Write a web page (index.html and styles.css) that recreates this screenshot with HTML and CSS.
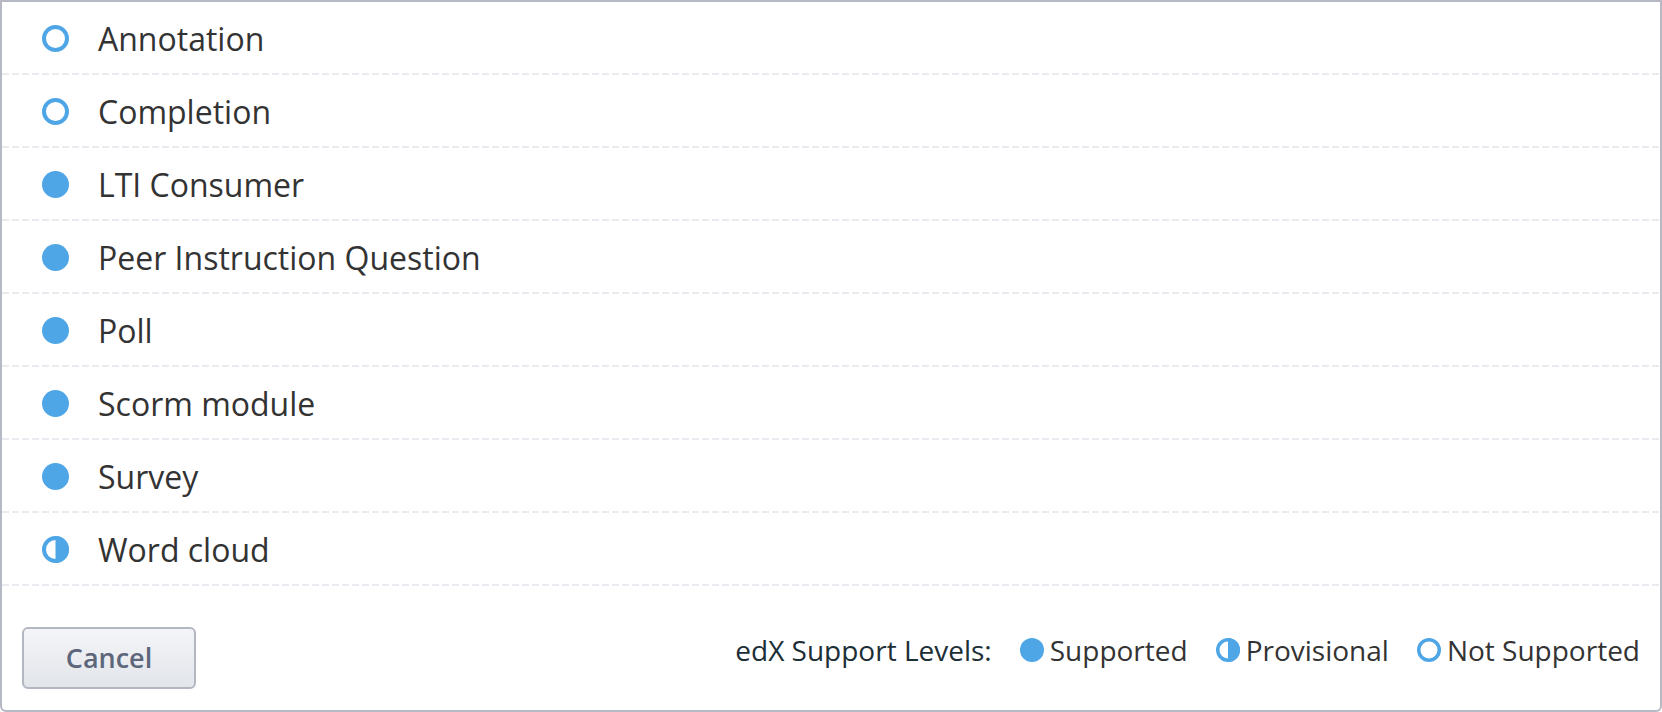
FILE: index.html
```html
<!DOCTYPE html>
<html>
<head>
<meta charset="utf-8">
<link rel="stylesheet" href="styles.css">
</head>
<body>
<div class="panel">
  <ul class="list">
    <li class="row"><svg class="ico" viewBox="0 0 27 27"><circle cx="13.5" cy="13.5" r="11.5" fill="none" stroke="#4fa6e6" stroke-width="4"/></svg><span class="name">Annotation</span></li>
    <li class="row"><svg class="ico" viewBox="0 0 27 27"><circle cx="13.5" cy="13.5" r="11.5" fill="none" stroke="#4fa6e6" stroke-width="4"/></svg><span class="name">Completion</span></li>
    <li class="row"><svg class="ico" viewBox="0 0 27 27"><circle cx="13.5" cy="13.5" r="13.5" fill="#4fa6e6"/></svg><span class="name">LTI Consumer</span></li>
    <li class="row"><svg class="ico" viewBox="0 0 27 27"><circle cx="13.5" cy="13.5" r="13.5" fill="#4fa6e6"/></svg><span class="name">Peer Instruction Question</span></li>
    <li class="row"><svg class="ico" viewBox="0 0 27 27"><circle cx="13.5" cy="13.5" r="13.5" fill="#4fa6e6"/></svg><span class="name">Poll</span></li>
    <li class="row"><svg class="ico" viewBox="0 0 27 27"><circle cx="13.5" cy="13.5" r="13.5" fill="#4fa6e6"/></svg><span class="name">Scorm module</span></li>
    <li class="row"><svg class="ico" viewBox="0 0 27 27"><circle cx="13.5" cy="13.5" r="13.5" fill="#4fa6e6"/></svg><span class="name">Survey</span></li>
    <li class="row"><svg class="ico" viewBox="0 0 27 27"><circle cx="13.5" cy="13.5" r="11.5" fill="none" stroke="#4fa6e6" stroke-width="4"/><path d="M13.5 0 A13.5 13.5 0 0 1 13.5 27 Z" fill="#4fa6e6"/></svg><span class="name">Word cloud</span></li>
  </ul>
  <div class="footer">
    <button class="cancel">Cancel</button>
    <div class="legend">
      <span class="legend-label">edX Support Levels:</span>
      <span class="legend-item"><svg class="lico" viewBox="0 0 24 24"><circle cx="12" cy="12" r="12" fill="#4fa6e6"/></svg>Supported</span>
      <span class="legend-item"><svg class="lico" viewBox="0 0 24 24"><circle cx="12" cy="12" r="10.25" fill="none" stroke="#4fa6e6" stroke-width="3.5"/><path d="M12 0 A12 12 0 0 1 12 24 Z" fill="#4fa6e6"/></svg>Provisional</span>
      <span class="legend-item"><svg class="lico" viewBox="0 0 24 24"><circle cx="12" cy="12" r="10.25" fill="none" stroke="#4fa6e6" stroke-width="3.5"/></svg>Not Supported</span>
    </div>
  </div>
</div>
</body>
</html>
```

FILE: styles.css
```css
* { box-sizing: border-box; }
html, body {
  margin: 0;
  padding: 0;
  background: #ffffff;
}
body {
  font-family: "Open Sans", "Noto Sans", sans-serif;
  width: 1662px;
  height: 712px;
  overflow: hidden;
}
.panel {
  width: 1662px;
  height: 712px;
  border: 2px solid #b6b9c4;
  border-radius: 0 0 6px 6px;
  background: #fff;
  display: flex;
  flex-direction: column;
}
.list {
  list-style: none;
  margin: 0;
  padding: 0;
}
.row {
  height: 73px;
  padding: 0 0 2px 40px;
  display: flex;
  align-items: center;
  background-image: repeating-linear-gradient(to right, #e9ebf0 0 7px, transparent 7px 10px);
  background-size: 100% 2px;
  background-position: left bottom;
  background-repeat: no-repeat;
}
.ico {
  width: 27px;
  height: 27px;
  flex: none;
  margin-top: 2px;
}
.name {
  margin-left: 29px;
  margin-top: 3px;
  font-size: 32px;
  color: #333333;
  line-height: 40px;
}
.footer {
  flex: 1;
  display: flex;
  justify-content: space-between;
  align-items: flex-start;
  padding: 41px 20px 0 20px;
}
.cancel {
  width: 174px;
  height: 62px;
  border: 2px solid #b3b7c2;
  border-radius: 6px;
  background: linear-gradient(#f4f5f8, #e2e5ea);
  font-family: "Open Sans", "Noto Sans", sans-serif;
  font-weight: 600;
  font-size: 27px;
  color: #5d667a;
  padding: 0 0 2px 0;
}
.legend {
  display: flex;
  align-items: center;
  gap: 28px;
  margin-top: 3px;
  height: 40px;
  font-size: 28px;
  color: #333333;
}
.legend-label {
  color: #1c2e36;
}
.legend-item {
  display: flex;
  align-items: center;
  gap: 6px;
}
.lico {
  width: 24px;
  height: 24px;
  flex: none;
}
```
